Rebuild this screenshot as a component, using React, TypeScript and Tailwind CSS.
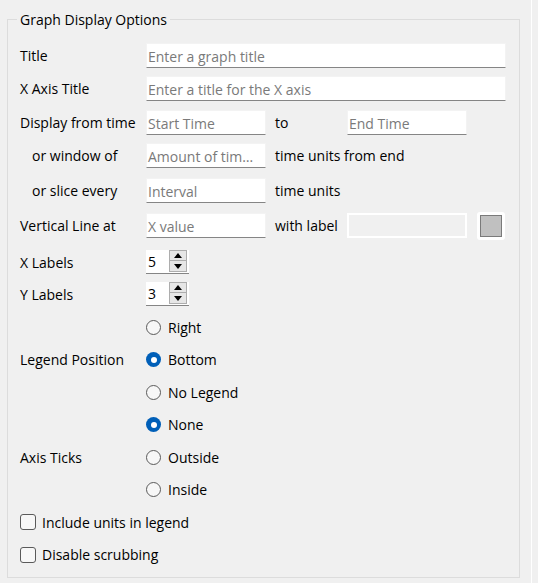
import React from "react";

const font = { fontFamily: '"Open Sans", "Noto Sans", sans-serif' };

function TextInput({ placeholder, w }: { placeholder: string; w: string }) {
  return (
    <div
      className={`${w} h-[25px] bg-white border border-[#f3f3f3] border-b-[#858585] flex items-center pl-[1px] pt-[1px] text-[14px] text-[#7a7a7a] whitespace-nowrap overflow-hidden`}
    >
      {placeholder}
    </div>
  );
}

function Spinner({ value }: { value: string }) {
  return (
    <div className="w-[43px] h-[24px] bg-white border-b border-[#858585] flex items-center">
      <div className="flex-1 pl-[2px] text-[14px] text-black">{value}</div>
      <div className="flex flex-col mr-[2px] mt-[-1px]">
        <div className="w-[18px] h-[11px] bg-[#e6e6e6] border border-[#adadad] flex items-center justify-center">
          <svg width="8" height="5" viewBox="0 0 8 5">
            <path d="M4 0 L8 5 L0 5 Z" fill="#000" />
          </svg>
        </div>
        <div className="w-[18px] h-[11px] bg-[#e6e6e6] border border-t-0 border-[#adadad] flex items-center justify-center">
          <svg width="8" height="5" viewBox="0 0 8 5">
            <path d="M0 0 L8 0 L4 5 Z" fill="#000" />
          </svg>
        </div>
      </div>
    </div>
  );
}

function Radio({ label, checked }: { label: string; checked?: boolean }) {
  return (
    <div className="h-[32.5px] flex items-center">
      {checked ? (
        <div className="w-[15px] h-[15px] rounded-full bg-[#005fb8] flex items-center justify-center">
          <div className="w-[6px] h-[6px] rounded-full bg-white" />
        </div>
      ) : (
        <div className="w-[15px] h-[15px] rounded-full border border-[#5a5a5a] bg-[#f7f7f7]" />
      )}
      <span className="ml-[7px] text-[14px] text-black">{label}</span>
    </div>
  );
}

function Checkbox({ label }: { label: string }) {
  return (
    <div className="h-[32.5px] flex items-center">
      <div className="w-[16px] h-[16px] rounded-[3px] border border-[#5a5a5a] bg-[#f7f7f7]" />
      <span className="ml-[6px] text-[14px] text-black">{label}</span>
    </div>
  );
}

function Label({ children, indent }: { children: React.ReactNode; indent?: boolean }) {
  return (
    <div className={`w-[126px] shrink-0 text-[14px] text-black whitespace-nowrap ${indent ? "pl-[12px]" : ""}`}>
      {children}
    </div>
  );
}

export default function App() {
  return (
    <div className="w-[538px] h-[583px] bg-[#f0f0f0] flex" style={font}>
      <div className="w-[531px] shrink-0 pt-[9px] pl-[7px]">
        <fieldset className="w-[513px] h-[569px] border border-[#dcdcdc] px-[12px] pb-0 pt-[13px]">
          <legend className="ml-[-3px] px-[3px] h-[21px] leading-[21px] text-[14px] text-black">
            Graph Display Options
          </legend>
          <div className="flex flex-col">
            <div className="h-[25px] flex items-center mb-[8px]">
              <Label>Title</Label>
              <TextInput placeholder="Enter a graph title" w="w-[360px]" />
            </div>
            <div className="h-[25px] flex items-center mb-[9px]">
              <Label>X Axis Title</Label>
              <TextInput placeholder="Enter a title for the X axis" w="w-[360px]" />
            </div>
            <div className="h-[25px] flex items-center mb-[8px]">
              <Label>Display from time</Label>
              <TextInput placeholder="Start Time" w="w-[120px]" />
              <span className="ml-[9px] w-[72px] text-[14px] text-black">to</span>
              <TextInput placeholder="End Time" w="w-[120px]" />
            </div>
            <div className="h-[25px] flex items-center mb-[10px]">
              <Label indent>or window of</Label>
              <TextInput placeholder="Amount of tim…" w="w-[120px]" />
              <span className="ml-[9px] text-[14px] text-black">time units from end</span>
            </div>
            <div className="h-[25px] flex items-center mb-[10px]">
              <Label indent>or slice every</Label>
              <TextInput placeholder="Interval" w="w-[120px]" />
              <span className="ml-[9px] text-[14px] text-black">time units</span>
            </div>
            <div className="h-[25px] flex items-center mb-[12px]">
              <Label>Vertical Line at</Label>
              <TextInput placeholder="X value" w="w-[120px]" />
              <span className="ml-[9px] w-[72px] text-[14px] text-black">with label</span>
              <div className="w-[120px] h-[25px] border-2 border-white bg-[#f0f0f0]" />
              <div className="ml-[10px] w-[28px] h-[28px] rounded-[3px] bg-white flex items-center justify-center">
                <div className="w-[22px] h-[22px] bg-[#c0c0c0] border border-[#7a7a7a]" />
              </div>
            </div>
            <div className="h-[24px] flex items-center mb-[8px]">
              <Label>X Labels</Label>
              <Spinner value="5" />
            </div>
            <div className="h-[24px] flex items-center mb-[4.75px]">
              <Label>Y Labels</Label>
              <Spinner value="3" />
            </div>
            <div className="flex items-center">
              <Label>Legend Position</Label>
              <div className="flex flex-col">
                <Radio label="Right" />
                <Radio label="Bottom" checked />
                <Radio label="No Legend" />
              </div>
            </div>
            <div className="flex items-center">
              <Label>Axis Ticks</Label>
              <div className="flex flex-col">
                <Radio label="None" checked />
                <Radio label="Outside" />
                <Radio label="Inside" />
              </div>
            </div>
            <Checkbox label="Include units in legend" />
            <Checkbox label="Disable scrubbing" />
          </div>
        </fieldset>
      </div>
      <div className="w-[1px] h-full bg-white" />
      <div className="flex-1" />
    </div>
  );
}
